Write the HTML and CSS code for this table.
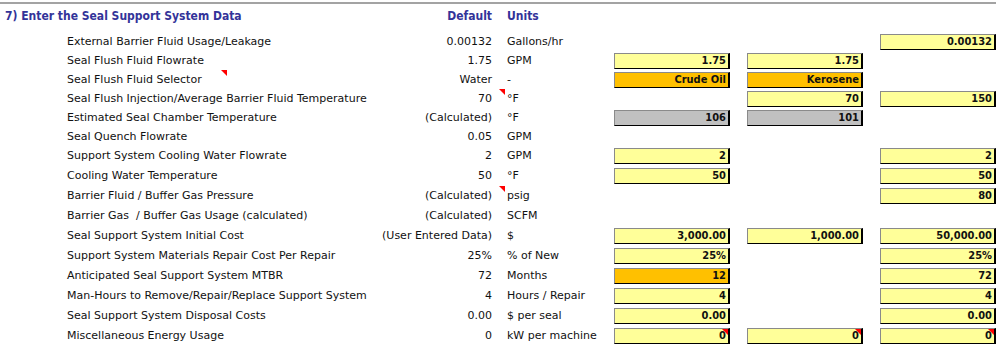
FILE: index.html
```html
<!DOCTYPE html>
<html>
<head>
<meta charset="utf-8">
<link rel="stylesheet" href="styles.css">
</head>
<body>
<div class="sheet">
  <div class="head">
    <span class="title">7) Enter the Seal Support System Data</span>
    <span class="def hd">Default</span>
    <span class="unit hd">Units</span>
  </div>

  <div class="row r19">
    <span class="lbl">External Barrier Fluid Usage/Leakage</span><span class="def">0.00132</span><span class="unit">Gallons/hr</span>
    <span class="ca"></span><span class="cb"></span><span class="cc"><span class="box y">0.00132</span></span>
  </div>
  <div class="row r19">
    <span class="lbl">Seal Flush Fluid Flowrate</span><span class="def">1.75</span><span class="unit">GPM</span>
    <span class="ca"><span class="box y">1.75</span></span><span class="cb"><span class="box y">1.75</span></span><span class="cc"></span>
  </div>
  <div class="row r19">
    <i class="tri tri-lbl"></i>
    <span class="lbl">Seal Flush Fluid Selector</span><span class="def">Water</span><span class="unit">-</span>
    <span class="ca"><span class="box o">Crude Oil</span></span><span class="cb"><span class="box o">Kerosene</span></span><span class="cc"></span>
  </div>
  <div class="row r19">
    <i class="tri tri-def"></i>
    <span class="lbl">Seal Flush Injection/Average Barrier Fluid Temperature</span><span class="def">70</span><span class="unit">°F</span>
    <span class="ca"></span><span class="cb"><span class="box y">70</span></span><span class="cc"><span class="box y">150</span></span>
  </div>
  <div class="row r19">
    <span class="lbl">Estimated Seal Chamber Temperature</span><span class="def">(Calculated)</span><span class="unit">°F</span>
    <span class="ca"><span class="box g">106</span></span><span class="cb"><span class="box g">101</span></span><span class="cc"></span>
  </div>
  <div class="row r19">
    <span class="lbl">Seal Quench Flowrate</span><span class="def">0.05</span><span class="unit">GPM</span>
    <span class="ca"></span><span class="cb"></span><span class="cc"></span>
  </div>
  <div class="row r20">
    <span class="lbl">Support System Cooling Water Flowrate</span><span class="def">2</span><span class="unit">GPM</span>
    <span class="ca"><span class="box y">2</span></span><span class="cb"></span><span class="cc"><span class="box y">2</span></span>
  </div>
  <div class="row r20">
    <span class="lbl">Cooling Water Temperature</span><span class="def">50</span><span class="unit">°F</span>
    <span class="ca"><span class="box y">50</span></span><span class="cb"></span><span class="cc"><span class="box y">50</span></span>
  </div>
  <div class="row r20">
    <i class="tri tri-def"></i>
    <span class="lbl">Barrier Fluid / Buffer Gas Pressure</span><span class="def">(Calculated)</span><span class="unit">psig</span>
    <span class="ca"></span><span class="cb"></span><span class="cc"><span class="box y">80</span></span>
  </div>
  <div class="row r20">
    <span class="lbl">Barrier Gas&nbsp; / Buffer Gas Usage (calculated)</span><span class="def">(Calculated)</span><span class="unit">SCFM</span>
    <span class="ca"></span><span class="cb"></span><span class="cc"></span>
  </div>
  <div class="row r20">
    <span class="lbl">Seal Support System Initial Cost</span><span class="def">(User Entered Data)</span><span class="unit">$</span>
    <span class="ca"><span class="box y">3,000.00</span></span><span class="cb"><span class="box y">1,000.00</span></span><span class="cc"><span class="box y">50,000.00</span></span>
  </div>
  <div class="row r20">
    <span class="lbl">Support System Materials Repair Cost Per Repair</span><span class="def">25%</span><span class="unit">% of New</span>
    <span class="ca"><span class="box y">25%</span></span><span class="cb"></span><span class="cc"><span class="box y">25%</span></span>
  </div>
  <div class="row r20">
    <span class="lbl">Anticipated Seal Support System MTBR</span><span class="def">72</span><span class="unit">Months</span>
    <span class="ca"><span class="box o">12</span></span><span class="cb"></span><span class="cc"><span class="box y">72</span></span>
  </div>
  <div class="row r20">
    <span class="lbl">Man-Hours to Remove/Repair/Replace Support System</span><span class="def">4</span><span class="unit">Hours / Repair</span>
    <span class="ca"><span class="box y">4</span></span><span class="cb"></span><span class="cc"><span class="box y">4</span></span>
  </div>
  <div class="row r20">
    <span class="lbl">Seal Support System Disposal Costs</span><span class="def">0.00</span><span class="unit">$ per seal</span>
    <span class="ca"><span class="box y">0.00</span></span><span class="cb"></span><span class="cc"><span class="box y">0.00</span></span>
  </div>
  <div class="row r20">
    <span class="lbl">Miscellaneous Energy Usage</span><span class="def">0</span><span class="unit">kW per machine</span>
    <span class="ca"><span class="box y note">0</span></span><span class="cb"><span class="box y note">0</span></span><span class="cc"><span class="box y note">0</span></span>
  </div>
</div>
</body>
</html>
```

FILE: styles.css
```css
html, body {
  margin: 0;
  padding: 0;
  background: #ffffff;
}

body {
  font-family: "DejaVu Sans", sans-serif;
  font-size: 11px;
  color: #111111;
}

.sheet {
  width: 996px;
  margin-top: 2px;
  border-top: 2px solid #a3a3a3;
}

.head,
.row {
  display: grid;
  grid-template-columns: 67px 308px 132px 107px 116px 133px 133px;
  white-space: nowrap;
}

.head {
  height: 28px;
  padding-top: 4px;
  box-sizing: border-box;
  line-height: 16px;
  align-items: start;
}

.title,
.hd,
.box {
  font-family: "DejaVu Sans Condensed", "DejaVu Sans", sans-serif;
  font-stretch: condensed;
  font-weight: bold;
}

.title {
  grid-column: 1 / 3;
  padding-left: 5px;
  font-size: 12px;
  color: #333399;
}

.hd {
  font-size: 12px;
  color: #333399;
}

.row {
  position: relative;
  align-items: center;
  line-height: 14px;
}

.r19 { height: 19px; }
.r20 { height: 20px; }

.lbl {
  grid-column: 2;
  overflow: visible;
}

.def {
  text-align: right;
  padding-right: 15px;
}

.cb .box,
.cc .box {
  margin-left: 17px;
}

.box {
  display: block;
  position: relative;
  height: 16px;
  box-sizing: border-box;
  border-top: 1px solid #8a8a8a;
  border-left: 1px solid #8a8a8a;
  border-right: 2px solid #000000;
  border-bottom: 1px solid #000000;
  padding-right: 2px;
  text-align: right;
  line-height: 14px;
  color: #111111;
}

.y { background: #ffff99; }
.o { background: #ffc000; }
.g { background: #c0c0c0; }

.tri,
.note::after {
  position: absolute;
  width: 0;
  height: 0;
  border-top: 6px solid #ff0000;
  border-left: 6px solid transparent;
}

.tri { top: 0; }
.tri-lbl { left: 221px; }
.tri-def { left: 499px; }

.note::after {
  content: "";
  top: 0;
  right: 0;
}
```
